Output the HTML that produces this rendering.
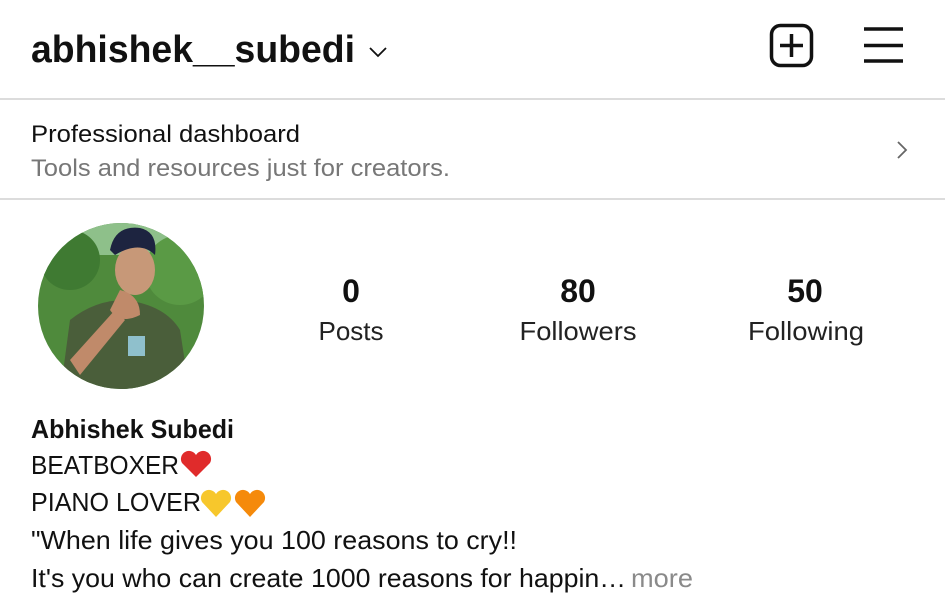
<!DOCTYPE html>
<html><head><meta charset="utf-8"><style>
html,body{margin:0;padding:0;background:#fff;width:945px;height:610px;overflow:hidden}
svg{display:block}
text{font-family:"Liberation Sans",sans-serif}
</style></head><body>
<svg width="945" height="610" viewBox="0 0 945 610" xmlns="http://www.w3.org/2000/svg">
<defs><clipPath id="c"><circle cx="121" cy="306" r="83"/></clipPath></defs>
<text x="31" y="62" font-size="38" font-weight="bold" fill="#111" textLength="324" lengthAdjust="spacingAndGlyphs">abhishek__subedi</text>
<path d="M370 48 L378 56 L386 48" fill="none" stroke="#111" stroke-width="1.8"/>
<rect x="771.5" y="25.5" width="40" height="40" rx="9" fill="none" stroke="#111" stroke-width="3.5"/>
<path d="M791.5 34 V57 M780 45.5 H803" stroke="#111" stroke-width="3.5"/>
<path d="M864 29 H903 M864 45.5 H903 M864 61 H903" stroke="#111" stroke-width="3.5"/>
<rect x="0" y="98" width="945" height="2" fill="#dcdcdc"/>
<text x="31" y="142" font-size="24" fill="#111" textLength="269" lengthAdjust="spacingAndGlyphs">Professional dashboard</text>
<text x="31" y="176" font-size="24" fill="#777" textLength="419" lengthAdjust="spacingAndGlyphs">Tools and resources just for creators.</text>
<path d="M898 142 L906 150 L898 158" fill="none" stroke="#666" stroke-width="1.8"/>
<rect x="0" y="198" width="945" height="2" fill="#dcdcdc"/>
<g clip-path="url(#c)">
<rect x="30" y="215" width="190" height="190" fill="#4f8a3c"/>
<rect x="30" y="215" width="190" height="40" fill="#8ec08a"/>
<circle cx="70" cy="260" r="30" fill="#3f7a32"/>
<circle cx="180" cy="270" r="35" fill="#5a9a45"/>
<path d="M60 395 L70 320 Q95 300 125 300 Q165 305 180 330 L190 395 Z" fill="#4a5e3a"/>
<ellipse cx="135" cy="270" rx="20" ry="25" fill="#c79878"/>
<path d="M110 250 Q115 225 140 228 Q158 232 155 255 Q140 240 115 255 Z" fill="#1d2440"/>
<path d="M120 290 Q140 295 140 315 Q120 325 110 310 Z" fill="#c08a6a"/>
<path d="M70 360 L115 310 L125 320 L80 375 Z" fill="#c08a6a"/>
<rect x="128" y="336" width="17" height="20" fill="#8fc0cc"/>
</g>
<text x="351" y="302" font-size="32" font-weight="bold" text-anchor="middle" fill="#111">0</text>
<text x="351" y="340" font-size="26" text-anchor="middle" fill="#222">Posts</text>
<text x="578" y="302" font-size="32" font-weight="bold" text-anchor="middle" fill="#111">80</text>
<text x="578" y="340" font-size="26" text-anchor="middle" fill="#222" textLength="117" lengthAdjust="spacingAndGlyphs">Followers</text>
<text x="805" y="302" font-size="32" font-weight="bold" text-anchor="middle" fill="#111">50</text>
<text x="806" y="340" font-size="26" text-anchor="middle" fill="#222" textLength="116" lengthAdjust="spacingAndGlyphs">Following</text>
<text x="31" y="438" font-size="26" font-weight="bold" fill="#111" textLength="203" lengthAdjust="spacingAndGlyphs">Abhishek Subedi</text>
<text x="31" y="474" font-size="26" fill="#111" textLength="148" lengthAdjust="spacingAndGlyphs">BEATBOXER</text>
<path d="M196 477 L182 463 A8 8 0 0 1 196 455 A8 8 0 0 1 210 463 Z" fill="#e02b2b"/>
<text x="31" y="511" font-size="26" fill="#111" textLength="170" lengthAdjust="spacingAndGlyphs">PIANO LOVER</text>
<path d="M216 517 L202 502 A8 8 0 0 1 216 494 A8 8 0 0 1 230 502 Z" fill="#f7c72c"/>
<path d="M250 517 L236 502 A8 8 0 0 1 250 494 A8 8 0 0 1 264 502 Z" fill="#f58a0b"/>
<text x="31" y="549" font-size="26" fill="#111" textLength="486" lengthAdjust="spacingAndGlyphs">"When life gives you 100 reasons to cry!!</text>
<text x="31" y="587" font-size="26" fill="#111" textLength="595" lengthAdjust="spacingAndGlyphs">It's you who can create 1000 reasons for happin…</text>
<text x="631" y="587" font-size="26" fill="#8a8a8a" textLength="62" lengthAdjust="spacingAndGlyphs">more</text>
</svg>
</body></html>
